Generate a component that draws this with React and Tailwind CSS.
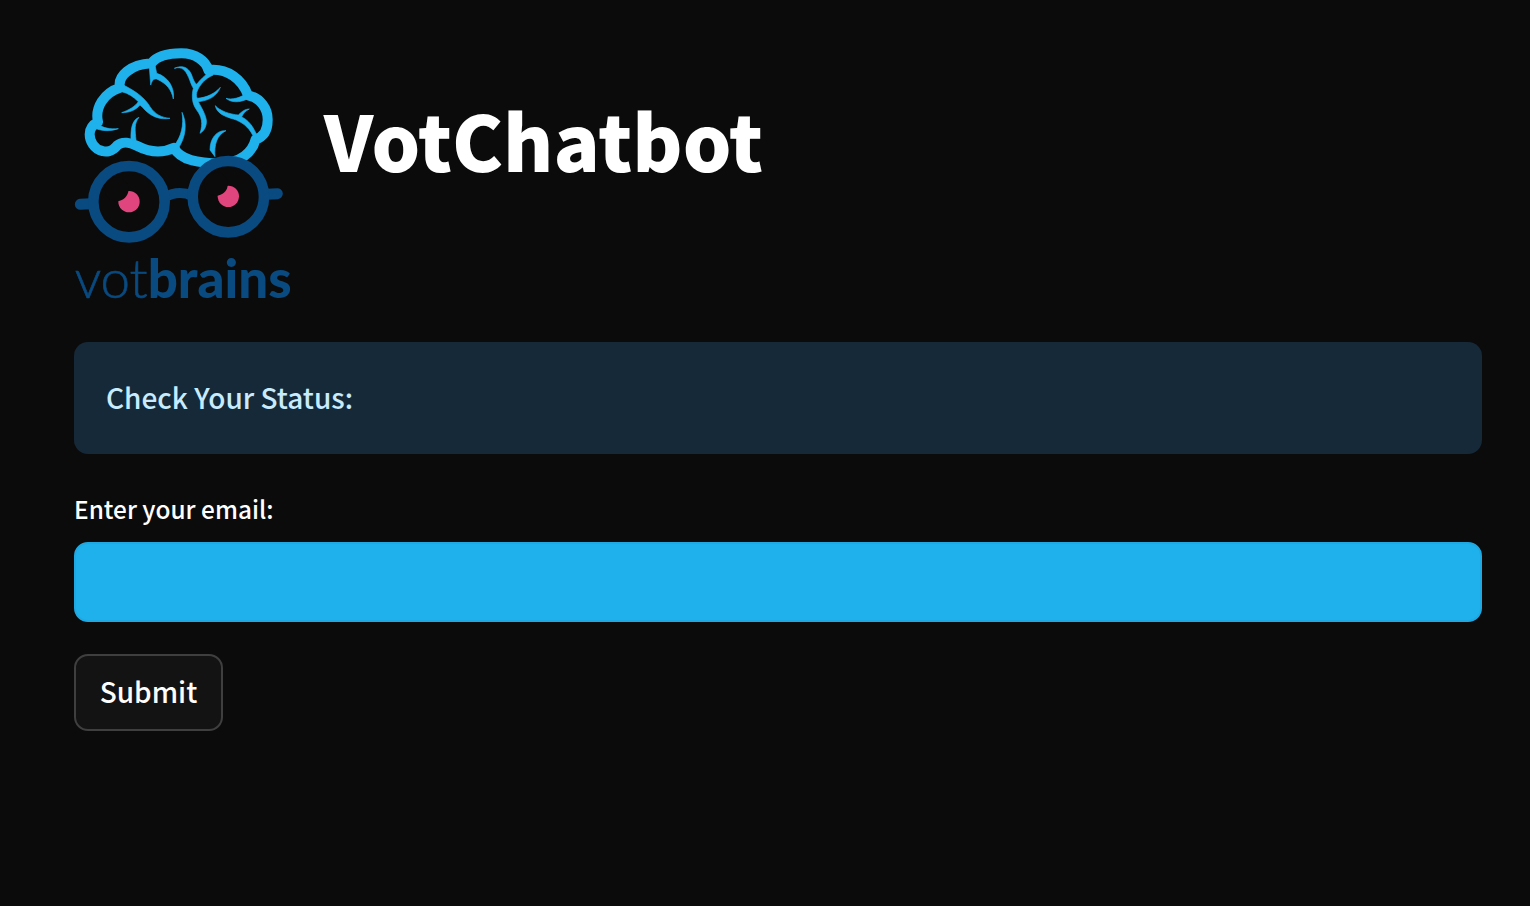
import React from "react";

const sourceSans = { fontFamily: '"Noto Sans CJK SC", "Noto Sans", sans-serif' };

const VotbrainsLogo = () => (
  <svg viewBox="0 0 660 810" className="w-[220px] h-[270px] shrink-0">
    {/* brain outline */}
    <path
      d="M130 298C115 318 95 318 85 315C60 310 47 285 47 265C47 245 58 235 72 228C62 185 90 140 138 125C130 90 170 55 232 52C250 28 290 22 322 22C365 22 395 45 403 72C460 65 505 100 522 148C560 155 582 190 581 222C581 250 570 272 545 280C535 320 500 350 440 352C380 352 320 345 300 305C265 322 225 318 190 300C170 290 145 285 130 298Z"
      fill="none"
      stroke="#1fb1ec"
      strokeWidth="30"
      strokeLinejoin="round"
    />
    {/* brain folds */}
    <g transform="translate(-42 -33)" fill="#1fb1ec" stroke="#1fb1ec" strokeWidth="2" strokeLinejoin="round">
      <path d="M268 95L272 150C276 140 278 130 290 132C320 145 335 165 340 192C345 160 325 125 290 115L285 90Z" />
      <path d="M190 150C230 170 255 190 270 215C285 238 305 248 330 250C300 255 275 245 255 225C250 220 245 214 240 210C225 228 205 233 185 233C205 226 225 215 235 200C220 185 205 175 185 170Z" />
      <path d="M110 265C130 280 150 283 175 281C150 290 125 288 105 280Z" />
      <path d="M237 247C215 255 212 285 213 315L228 315C225 285 222 265 237 247Z" />
      <path d="M366 232C372 270 365 305 340 335L355 340C378 305 382 265 366 232Z" />
      <path d="M343 100C365 90 385 95 395 120C400 135 405 145 410 148C420 135 435 120 450 110L460 120C435 130 420 150 413 165C408 175 408 185 412 190C440 188 465 175 481 157C470 185 445 197 415 200C425 220 445 250 438 270C435 283 428 290 420 295C430 265 425 245 410 225C395 205 395 180 400 160C390 145 385 110 365 100C357 97 350 98 343 100Z" />
      <path d="M498 190C515 195 540 190 565 172L575 185C550 200 520 208 498 190Z" />
      <path d="M466 212C480 228 510 238 535 240C545 230 555 222 568 222C555 228 548 238 545 246C565 255 580 275 590 300L578 300C565 275 545 260 520 252C495 245 470 235 466 212Z" />
      <path d="M498 287C470 285 450 310 450 345L465 365C462 330 470 300 498 287Z" />
    </g>
    {/* glasses */}
    <g fill="none" stroke="#094a80" strokeLinecap="round">
      <path d="M270 455C300 438 330 438 355 450" strokeWidth="30" />
      <path d="M19 475L50 473" strokeWidth="33" />
      <path d="M580 445L610 443" strokeWidth="33" />
    </g>
    <g fill="#0b0b0b" stroke="#094a80" strokeWidth="32">
      <circle cx="165" cy="467" r="107" />
      <circle cx="463" cy="452" r="107" />
    </g>
    <circle cx="165" cy="467" r="32" fill="#e0457d" />
    <circle cx="128" cy="430" r="35.5" fill="#0b0b0b" />
    <circle cx="463" cy="451" r="32" fill="#e0457d" />
    <circle cx="426" cy="414" r="35.5" fill="#0b0b0b" />
    <text x="2" y="757" fontSize="162" fill="#094a80" textLength="651" lengthAdjust="spacingAndGlyphs" style={{ fontFamily: "Lato, sans-serif" }}>
      <tspan className="font-light" stroke="#094a80" strokeWidth="2">vot</tspan>
      <tspan className="font-black">brains</tspan>
    </text>
  </svg>
);

export default function App() {
  return (
    <div className="min-h-screen bg-[#0b0b0b] pl-[74px] pr-[48px] pt-[46px] text-white" style={sourceSans}>
      <header className="flex items-start gap-[30px]">
        <VotbrainsLogo />
        <h1 className="text-[76.6px] leading-[96px] font-black pt-[45px]">VotChatbot</h1>
      </header>

      <div className="mt-[26px] h-[112px] flex items-center rounded-[14px] bg-[#162938] px-[32px] pb-[2px] text-[28px] font-medium text-[#c7ebff]">
        Check Your Status:
      </div>

      <label className="block mt-[37px] text-[24.4px] leading-[36px] font-medium">Enter your email:</label>
      <input
        type="text"
        className="block mt-[15px] w-full h-[80px] rounded-[14px] bg-[#1fb1ec] border-2 border-[#1fa9e2] outline-none"
      />

      <button
        type="button"
        className="block mt-[32px] w-[149px] h-[77px] pb-[3px] rounded-[14px] bg-[#131313] border-2 border-[#3f3f3f] text-[28px] font-medium"
      >
        Submit
      </button>
    </div>
  );
}
